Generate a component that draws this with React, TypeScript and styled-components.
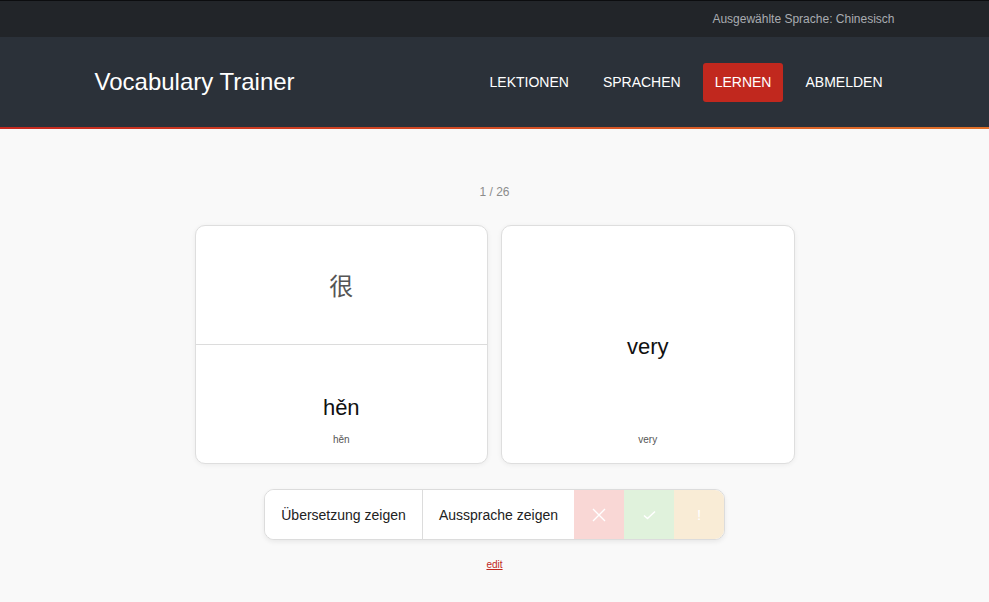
import React from "react";
import styled, { createGlobalStyle } from "styled-components";

const Global = createGlobalStyle`
  html, body { margin: 0; padding: 0; background: #f9f9f9; }
  body { font-family: "Liberation Sans", Arial, "Noto Sans CJK SC", sans-serif; }
  * { box-sizing: border-box; }
`;

const Page = styled.div`
  min-height: 602px;
  background: #f9f9f9;
`;

const TopBar = styled.div`
  height: 37px;
  background: #222529;
  border-top: 1px solid #0c0d0f;
`;

const Container = styled.div`
  width: 800px;
  margin: 0 auto;
  height: 100%;
  display: flex;
  align-items: center;
`;

const TopInfo = styled.span`
  margin-left: auto;
  font-size: 12px;
  color: #a9acb1;
`;

const Header = styled.header`
  height: 92px;
  background: #2b3139;
  border-bottom: 2px solid transparent;
  border-image: linear-gradient(to right, #c5281f, #e2722a) 1;
`;

const Brand = styled.div`
  font-size: 24px;
  color: #fff;
  letter-spacing: 0;
`;

const Nav = styled.nav`
  margin-left: auto;
  display: flex;
  gap: 10px;
`;

const NavItem = styled.a<{ $active?: boolean }>`
  height: 39px;
  padding: 0 12px;
  display: flex;
  align-items: center;
  font-size: 14px;
  color: #fff;
  text-transform: uppercase;
  border-radius: 3px;
  background: ${(p) => (p.$active ? "#c1281e" : "transparent")};
`;

const Main = styled.main`
  display: flex;
  flex-direction: column;
  align-items: center;
  padding-top: 56px;
`;

const Counter = styled.div`
  font-size: 12px;
  color: #8c8c8c;
  height: 14px;
  line-height: 14px;
`;

const Cards = styled.div`
  margin-top: 26px;
  width: 600px;
  display: grid;
  grid-template-columns: 1fr 1fr;
  gap: 13px;
`;

const Card = styled.div`
  height: 239px;
  background: #fff;
  border: 1px solid #dedede;
  border-radius: 10px;
  box-shadow: 0 1px 5px rgba(0, 0, 0, 0.06);
  display: flex;
  flex-direction: column;
  overflow: hidden;
`;

const Half = styled.div<{ $divider?: boolean }>`
  flex: 1;
  display: flex;
  flex-direction: column;
  align-items: center;
  justify-content: center;
  position: relative;
  border-bottom: ${(p) => (p.$divider ? "1px solid #dcdcdc" : "none")};
`;

const Hanzi = styled.div`
  font-family: "Noto Sans CJK SC", sans-serif;
  font-size: 24px;
  color: #555;
  line-height: 1;
`;

const Big = styled.div<{ $offset?: number }>`
  font-size: 22px;
  color: #111;
  line-height: 1;
  margin-top: ${(p) => p.$offset ?? 0}px;
`;

const Small = styled.div`
  position: absolute;
  bottom: 18px;
  left: 0;
  right: 0;
  text-align: center;
  font-size: 10px;
  color: #555;
`;

const ButtonGroup = styled.div`
  margin-top: 25px;
  width: 461px;
  height: 51px;
  display: flex;
  border: 1px solid #dcdcdc;
  border-radius: 10px;
  overflow: hidden;
  background: #fff;
  box-shadow: 0 2px 5px rgba(0, 0, 0, 0.07);
`;

const TextButton = styled.button<{ $w: number; $divider?: boolean }>`
  width: ${(p) => p.$w}px;
  border: none;
  border-right: ${(p) => (p.$divider ? "1px solid #dcdcdc" : "none")};
  background: #fff;
  font-family: inherit;
  font-size: 14px;
  color: #222;
  padding: 0;
`;

const IconButton = styled.button<{ $bg: string }>`
  width: 50px;
  border: none;
  background: ${(p) => p.$bg};
  color: #fff;
  display: flex;
  align-items: center;
  justify-content: center;
  padding: 0;
  font-family: inherit;
  font-size: 15px;
`;

const EditLink = styled.a`
  margin-top: 19px;
  font-size: 10px;
  color: #c1281e;
  text-decoration: underline;
`;

export default function App() {
  return (
    <Page>
      <Global />
      <TopBar>
        <Container>
          <TopInfo>Ausgewählte Sprache: Chinesisch</TopInfo>
        </Container>
      </TopBar>
      <Header>
        <Container>
          <Brand>Vocabulary Trainer</Brand>
          <Nav>
            <NavItem>Lektionen</NavItem>
            <NavItem>Sprachen</NavItem>
            <NavItem $active>Lernen</NavItem>
            <NavItem>Abmelden</NavItem>
          </Nav>
        </Container>
      </Header>
      <Main>
        <Counter>1 / 26</Counter>
        <Cards>
          <Card>
            <Half $divider>
              <Hanzi>很</Hanzi>
            </Half>
            <Half>
              <Big $offset={8}>hěn</Big>
              <Small>hěn</Small>
            </Half>
          </Card>
          <Card>
            <Half>
              <Big $offset={4}>very</Big>
              <Small>very</Small>
            </Half>
          </Card>
        </Cards>
        <ButtonGroup>
          <TextButton $w={158} $divider>Übersetzung zeigen</TextButton>
          <TextButton $w={151}>Aussprache zeigen</TextButton>
          <IconButton $bg="#f9d7d5">
            <svg width="14" height="14" viewBox="0 0 14 14" fill="none" stroke="#fff" strokeWidth="1.4">
              <path d="M1 1L13 13M13 1L1 13" />
            </svg>
          </IconButton>
          <IconButton $bg="#e0f2dc">
            <svg width="13" height="10" viewBox="0 0 13 10" fill="none" stroke="#fff" strokeWidth="1.5">
              <path d="M1 5.5L4.5 8.5L12 1.5" />
            </svg>
          </IconButton>
          <IconButton $bg="#f9ecd6">!</IconButton>
        </ButtonGroup>
        <EditLink>edit</EditLink>
      </Main>
    </Page>
  );
}
